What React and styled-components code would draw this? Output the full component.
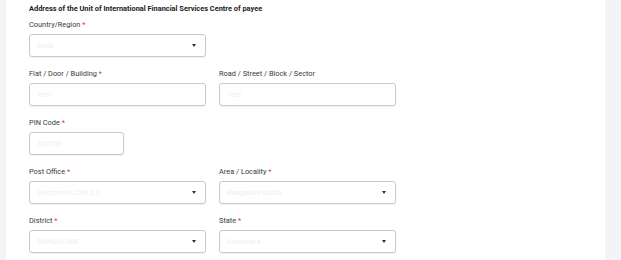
import styled, { createGlobalStyle } from 'styled-components';

const Global = createGlobalStyle`
  html, body {
    margin: 0;
    padding: 0;
    background: #f3f4f8;
  }
  body {
    font-family: Roboto, "Liberation Sans", Arial, sans-serif;
  }
`

const Page = styled.div`
  display: flex;
  height: 260px;
  overflow: hidden;
`
const Panel = styled.div`
  margin-left: 6px;
  width: 599px;
  background: #fff;
  padding: 4px 0 0 23px;
  box-sizing: border-box;
`
const Heading = styled.div`
  font-size: 7.4px;
  line-height: 10px;
  font-weight: 700;
  color: #222;
  margin-bottom: 6px;
`
const Form = styled.div`
  display: flex;
  flex-direction: column;
  gap: 12px;
`
const Row = styled.div`
  display: flex;
  gap: 13px;
`
const Field = styled.div`
  display: flex;
  flex-direction: column;
  width: ${props => props.w || 177}px;
`
const Label = styled.div`
  font-size: 7.4px;
  line-height: 10px;
  color: #3a3a3a;
  margin-bottom: 4px;
  white-space: nowrap;
`
const Req = styled.span`
  color: #e53935;
`
const Box = styled.div`
  height: 23px;
  box-sizing: border-box;
  border: 1px solid #c9c9c9;
  border-radius: 3px;
  box-shadow: 0 1px 1px rgba(0, 0, 0, 0.06);
  display: flex;
  align-items: center;
  justify-content: space-between;
  padding: 0 9px 0 7px;
  font-size: 7.4px;
  color: #efefef;
`
const Caret = styled.span`
  width: 0;
  height: 0;
  border-left: 2.5px solid transparent;
  border-right: 2.5px solid transparent;
  border-top: 3px solid #333;
`

function Input({ label, required, value, select, w }) {
  return (
    <Field w={w}>
      <Label>{label}{required && <Req> *</Req>}</Label>
      <Box>
        <span>{value}</span>
        {select && <Caret />}
      </Box>
    </Field>
  )
}

export default function App() {
  return (
    <>
      <Global />
      <Page>
        <Panel>
          <Heading>Address of the Unit of International Financial Services Centre of payee</Heading>
          <Form>
            <Row>
              <Input label="Country/Region" required value="India" select />
            </Row>
            <Row>
              <Input label="Flat / Door / Building" required value="Test" />
              <Input label="Road / Street / Block / Sector" value="Test" />
            </Row>
            <Row>
              <Input label="PIN Code" required value="560100" w={95} />
            </Row>
            <Row>
              <Input label="Post Office" required value="Electronics City S.O" select />
              <Input label="Area / Locality" required value="Bangalore South" select />
            </Row>
            <Row>
              <Input label="District" required value="BANGALORE" select />
              <Input label="State" required value="Karnataka" select />
            </Row>
          </Form>
        </Panel>
      </Page>
    </>
  )
}
